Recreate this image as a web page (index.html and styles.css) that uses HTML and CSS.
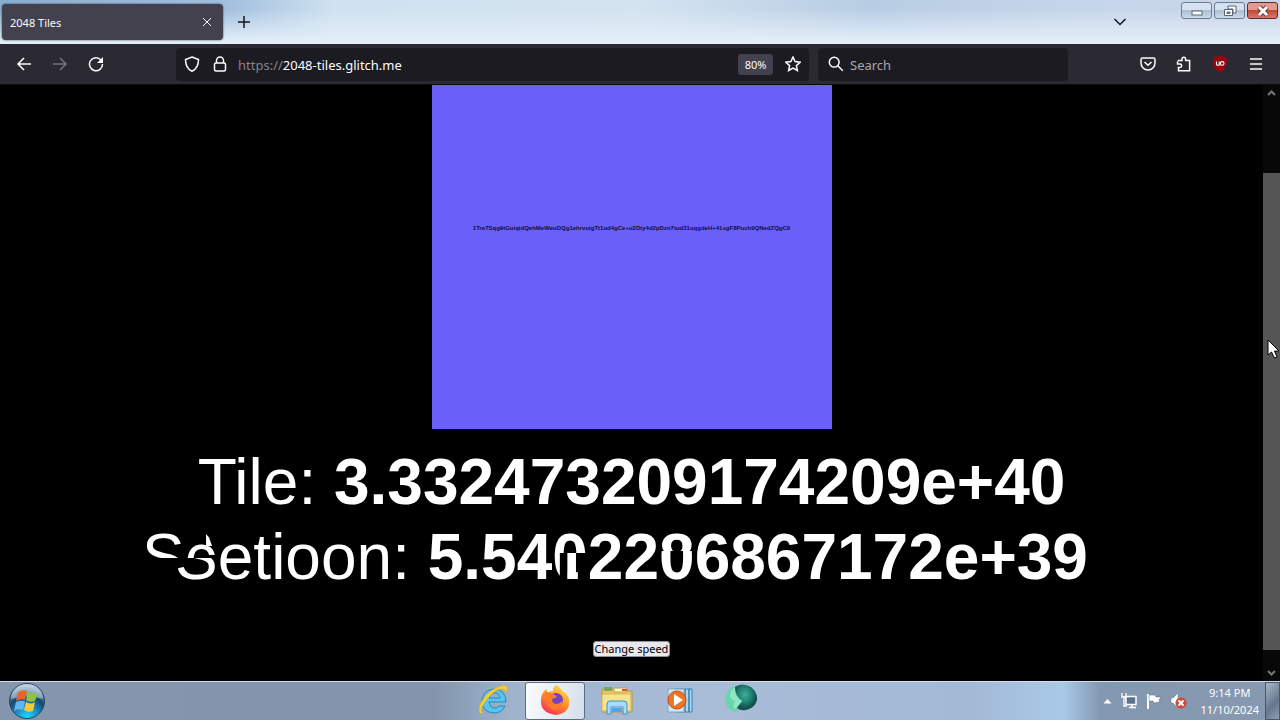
FILE: index.html
```html
<!DOCTYPE html>
<html lang="en">
<head>
<meta charset="utf-8">
<title>2048 Tiles</title>
<link rel="stylesheet" href="styles.css">
</head>
<body>
<header class="titlebar">
  <div class="tab">
    <span>2048 Tiles</span>
    <button class="icon-btn tab-close" aria-label="Close tab"><svg width="10" height="10" viewBox="0 0 10 10"><path d="M1 1l8 8M9 1L1 9"/></svg></button>
  </div>
  <button class="icon-btn new-tab" aria-label="New tab"><svg width="14" height="14" viewBox="0 0 14 14"><path d="M7 1v12M1 7h12"/></svg></button>
  <button class="icon-btn list-tabs" aria-label="List all tabs"><svg width="14" height="10" viewBox="0 0 14 10"><path d="M1.500 2l5.500 5.500L12.500 2"/></svg></button>
  <div class="window-controls">
    <button aria-label="Minimize"><svg width="14" height="12" viewBox="0 0 14 12"><rect x="2" y="6" width="10" height="4" fill="#fff" stroke="#566579"/></svg></button>
    <button aria-label="Restore"><svg width="14" height="12" viewBox="0 0 14 12"><path d="M5 1h8v7h-3V4H5z" fill="#fff" stroke="#566579"/><path d="M1.500 4.500h8v6h-8z" fill="#fff" stroke="#566579"/><path d="M4 7h3v1.500H4z" fill="#8ca0b8" stroke="#566579"/></svg></button>
    <button class="close" aria-label="Close"><svg width="14" height="12" viewBox="0 0 14 12"><path d="M3 2l8 8M11 2l-8 8" stroke="#6e3339" stroke-width="5"/><path d="M3 2l8 8M11 2l-8 8" stroke="#fff" stroke-width="3"/></svg></button>
  </div>
</header>
<nav class="toolbar">
  <div class="nav-buttons">
    <button class="icon-btn" aria-label="Back"><svg width="16" height="16" viewBox="0 0 16 16"><path d="M15 8H2M8 2L2 8l6 6"/></svg></button>
    <button class="icon-btn dim" aria-label="Forward"><svg width="16" height="16" viewBox="0 0 16 16"><path d="M1 8h13M8 2l6 6-6 6"/></svg></button>
    <button class="icon-btn" aria-label="Reload"><svg width="16" height="16" viewBox="0 0 16 16"><path d="M13 4a6.500 6.500 0 1 0 1.500 4"/><path d="M15 1v6H9z" fill="#fbfbfe" stroke="none"/></svg></button>
  </div>
  <div class="address">
    <button class="icon-btn" aria-label="Protections"><svg width="16" height="16" viewBox="0 0 16 16"><path d="M8 1l6.500 2.500C14.500 9 13 13 8 15.300 3 13 1.500 9 1.500 3.500z"/></svg></button>
    <button class="icon-btn" aria-label="Site security"><svg width="16" height="16" viewBox="0 0 16 16"><rect x="2.500" y="7" width="11" height="8" rx="1.500"/><path d="M4.500 7V4.500a3.500 3.500 0 0 1 7 0V7"/></svg></button>
    <a class="url" href="#"><span>https://</span>2048-tiles.glitch.me</a>
    <button class="zoom-level">80%</button>
    <button class="icon-btn" aria-label="Bookmark"><svg width="16" height="16" viewBox="0 0 16 16"><path d="M8 1l2.100 4.600 5 .6-3.700 3.400 1 4.900L8 12.100l-4.400 2.400 1-4.900L.9 6.200l5-.6z"/></svg></button>
  </div>
  <div class="search">
    <svg class="line" width="16" height="16" viewBox="0 0 16 16"><circle cx="6.200" cy="6.200" r="4.900"/><path d="M9.800 9.800l5 5"/></svg>
    <input type="text" placeholder="Search" aria-label="Search">
  </div>
  <div class="extensions">
    <button class="icon-btn" aria-label="Pocket"><svg width="16" height="16" viewBox="0 0 16 16"><path d="M2.500 2h11a1.500 1.500 0 0 1 1.500 1.500V7A7 7 0 0 1 1 7V3.500A1.500 1.500 0 0 1 2.500 2z"/><path d="M4.500 6L8 9.300 11.500 6"/></svg></button>
    <button class="icon-btn" aria-label="Extensions"><svg width="16" height="16" viewBox="0 0 16 16"><path d="M2.500 5.500V4.500H6V3a1.800 1.800 0 0 1 3.600 0v1.500h4v10.300H2.500v-3.300H4a1.600 1.600 0 0 0 0-3.400H1.500V5.500"/></svg></button>
    <button class="icon-btn ublock" aria-label="uBlock Origin"><svg width="16" height="16" viewBox="0 0 16 16"><path d="M8 0c2 1.500 4 2 6 2 .8 6-1 11-6 14C3 13 1.200 8 2 2c2 0 4-.5 6-2z" fill="#970711" stroke="#970711"/><path d="M4.500 5.500v2.700q0 1 1.300 1h1.400V5.500" stroke="#fff" stroke-width="1.100"/><circle cx="10.200" cy="7.400" r="1.800" stroke="#fff" stroke-width="1.100"/></svg></button>
    <button class="icon-btn" aria-label="Menu"><svg width="16" height="16" viewBox="0 0 16 16"><path d="M2 3h12M2 8h12M2 13h12"/></svg></button>
  </div>
</nav>
<div class="viewport">
  <main class="page">
    <div class="tile">1Tre7Sqg9tGuiqidQehMeWeuDQg1ehrvuigTt1ud4gCe+u2Dty4d2pDzn7tud31uqgdeH+41sgF8Puch9QNedZQgC9</div>
    <p class="score">Tile: <b>3.332473209174209e+40</b></p>
    <p class="score"><span class="blend notch"><span class="lower-s">S</span><span class="over upper-sc" aria-hidden="true">Sc</span></span>etioon: <b>5.54<span class="blend"><span class="lower-one">1</span><span class="over upper-zero" aria-hidden="true">0</span><span class="over side-zero" aria-hidden="true">0</span></span>22<span class="blend"><span class="lower-zero">0</span><span class="over upper-eight" aria-hidden="true">8</span></span>6867172e+39</b></p>
    <button class="speed">Change speed</button>
  </main>
  <aside class="scrollbar">
    <svg width="9" height="6" viewBox="0 0 9 6"><path d="M1 5l3.500-3.500L8 5"/></svg>
    <div class="track"><div class="thumb"></div></div>
    <svg class="end" width="9" height="6" viewBox="0 0 9 6"><path d="M1 1l3.500 3.500L8 1"/></svg>
  </aside>
</div>
<footer class="taskbar">
  <button class="start" aria-label="Start"><svg width="38" height="38" viewBox="0 0 38 38">
    <defs><radialGradient id="orb" cx=".5" cy=".95" r=".9"><stop offset="0" stop-color="#20d8ff"/><stop offset=".4" stop-color="#1683bd"/><stop offset=".65" stop-color="#17466f"/><stop offset="1" stop-color="#a8bed0"/></radialGradient></defs>
    <circle cx="19" cy="19" r="17.500" fill="url(#orb)" stroke="#29465f"/>
    <path d="M3 17a16 15 0 0 1 32 0q-16-5-32 0z" fill="#dceaf3" opacity=".45"/>
    <path d="M10 10q5-3 9-1l-2 9q-4-2-9 1z" fill="#e9632c"/><path d="M20 10q5 3 10 1l-3 8q-5 2-9-1z" fill="#8fc443"/><path d="M8 20q5-2 9-.5L15 28q-5-2-9 1z" fill="#62b5ed"/><path d="M18 20q5 3 9 0l-2 9q-5 2-9-1z" fill="#fbc83a"/></svg></button>
  <div class="apps">
    <button aria-label="Internet Explorer"><svg width="34" height="34" viewBox="0 0 34 34"><path d="M30 19H13q1 6 6 6 3 0 4-2h6q-3 7-11 7Q6 29 6 18 7 7 18 6q12 1 12 13zM13 15h11q-1-5-5-5-5 0-6 5z" fill="#55c6ee" stroke="#2589c4"/><path d="M5 31C-1 27 8 11 18 6q11-6 13-2 1 3-2 7 1-5-3-5-6 0-13 8C7 21 3 29 7 29z" fill="#f6ce32" stroke="#d6a52c" stroke-width=".5"/></svg></button>
    <button class="active" aria-label="Firefox"><svg width="32" height="32" viewBox="0 0 32 32"><defs><linearGradient id="fox" x1=".8" y1="0" x2=".25" y2="1"><stop offset="0" stop-color="#ffe23c"/><stop offset=".45" stop-color="#ff9a28"/><stop offset="1" stop-color="#f12c55"/></linearGradient></defs><path d="M17 1q5 3 6 6 5 2 7 8 2 14-13 16Q1 29 2 16q0-6 5-11l2 4q2-2 5-2 0-4 3-6z" fill="url(#fox)"/><circle cx="17" cy="16" r="7" fill="#7343c4"/><path d="M5 9q5-2 8 1l5 2q-2 3-5 3 0 5 5 5 3 0 5-3 1 8-6 9Q6 25 8 14z" fill="#ff7a29"/></svg></button>
    <button aria-label="Windows Explorer"><svg width="34" height="34" viewBox="0 0 34 34"><path d="M2 6h10l2 2h18v21H2z" fill="#e9c867" stroke="#bd963e"/><path d="M4 4h8v4H4z" fill="#79a65b"/><path d="M14 5h13v4H14z" fill="#fff7cf" stroke="#c4a349"/><path d="M22 6h5v2h-5z" fill="#cc533b"/><path d="M2 11h29v17H2z" fill="#f6e28f" stroke="#d4b65c"/><path d="M7 31V21q0-3 3-3h14q3 0 3 3v10h-4v-7H11v7z" fill="#a4ddf5" stroke="#428fc0"/><path d="M12 25h10v4H12z" fill="#4fa9d8"/></svg></button>
    <button aria-label="Windows Media Player"><svg width="32" height="32" viewBox="0 0 32 32"><path d="M12 5h17v23H12z" fill="#add7ee" stroke="#3e83ae"/><path d="M22 5v23M26 5v23" stroke="#2783b5" stroke-width="1.500"/><path d="M5 5h16v23H5z" fill="#d3e6f0" stroke="#7ca6bf"/><circle cx="14" cy="16" r="9" fill="#ef7424" stroke="#cb5013"/><path d="M11 10l9 6-9 6z" fill="#fff"/></svg></button>
    <button class="raised" aria-label="Teal sphere"><svg width="34" height="30" viewBox="0 0 34 30"><defs><radialGradient id="ball" cx=".45" cy=".4"><stop stop-color="#3fae94"/><stop offset=".6" stop-color="#1f8275"/><stop offset="1" stop-color="#14524c"/></radialGradient></defs><path d="M13 1Q2 4 1 16q2 11 11 12l6-9z" fill="#66d6ad"/><path d="M11 3Q18-2 27 3q7 6 6 13-2 8-11 10-6 1-9-2l5-7q-7-5-7-14z" fill="url(#ball)"/><path d="M11 3q-2 9 7 14l-7 8q-3-3 0-8-5-2-5-6 1-6 5-8z" fill="#92e5c4"/></svg></button>
  </div>
  <div class="tray">
    <svg width="9" height="6" viewBox="0 0 9 6"><path d="M0.500 5.500L4.500 1l4 4.500z" fill="#fff"/></svg>
    <svg width="18" height="18" viewBox="0 0 18 18"><path d="M6 4.500h10v8H6zM9 15.500h7M12 13v2" fill="#59738c" stroke="#fff" stroke-width="1.500"/><path d="M2 1v4h4V1M4 5v9h3" fill="none" stroke="#fff" stroke-width="1.300"/></svg>
    <svg width="16" height="18" viewBox="0 0 16 18"><path d="M2 2v15" stroke="#fff" stroke-width="2"/><path d="M3 3h6l1 2h5l-2 3 1 2-6 1-1-2H3z" fill="#fff" stroke="#52687d" stroke-width=".5"/></svg>
    <svg width="18" height="18" viewBox="0 0 18 18"><path d="M1 6h2l5-5v15l-5-5H1z" fill="#fff" stroke="#647a90" stroke-width=".5"/><circle cx="11" cy="11" r="5.500" fill="#d34937"/><path d="M8.500 8.500l5 5m0-5l-5 5" stroke="#fff" stroke-width="2"/></svg>
    <time class="clock">9:14 PM<br>11/10/2024</time>
    <button class="show-desktop" aria-label="Show desktop"></button>
  </div>
</footer>
<svg class="pointer" width="13" height="20" viewBox="0 0 13 20"><path d="M1 1v15l3.500-3 3 6 2.500-1-2.500-6H12z" fill="#fff" stroke="#000"/></svg>
</body>
</html>
```
FILE: styles.css
```css
* { box-sizing: border-box; }
body {
  margin: 0;
  height: 100vh;
  display: flex;
  flex-direction: column;
  overflow: hidden;
  background: #000;
  font-family: "Noto Sans", sans-serif;
  font-size: 13px;
}
button { border: 0; padding: 0; background: none; font: inherit; color: inherit; }
svg { display: block; flex: none; }

.titlebar {
  flex: none;
  height: 44px;
  display: flex;
  align-items: center;
  padding-left: 2px;
  background:
    linear-gradient(180deg, transparent 20%, #e4eef8 95%),
    linear-gradient(90deg, #89add0 0, #a3c0de 18%, #cfe2f0 26%, #d4e3f0 50%, #b8cde3 68%, #c6d6ea 85%, #c9d5e8 100%);
}
.icon-btn { display: flex; align-items: center; justify-content: center; flex: none; }
.icon-btn svg, .line { fill: none; stroke: #fbfbfe; stroke-width: 1.5; }
.tab {
  width: 221px;
  height: 36px;
  padding: 0 11px 0 8px;
  display: flex;
  align-items: center;
  justify-content: space-between;
  border-radius: 4px;
  background: #42414d;
  box-shadow: 0 0 2px #33323d;
  color: #fbfbfe;
  font-size: 11px;
}
.tab-close svg { stroke-width: 1; }
.new-tab { margin-left: 14px; }
.new-tab svg, .list-tabs svg { stroke: #15141a; }
.list-tabs { margin-left: auto; }
.window-controls { display: flex; gap: 2px; align-self: flex-start; margin: 2px 2px 0 54px; }
.window-controls button {
  width: 31px;
  height: 17px;
  display: flex;
  align-items: center;
  justify-content: center;
  border: 1px solid #6c7c92;
  border-radius: 3px;
  background: linear-gradient(#d5e1ef 45%, #aebfd4 50%, #cbdaea);
}
.window-controls .close { border-color: #612832; background: linear-gradient(#e49b8d 45%, #c5473a 50%, #d47b68); }

.toolbar {
  flex: none;
  height: 41px;
  display: flex;
  align-items: center;
  padding: 0 16px;
  background: #2b2a33;
  border-bottom: 1px solid #0c0c0d;
}
.nav-buttons, .extensions { display: flex; gap: 20px; }
.dim { opacity: .35; }
.address {
  flex: 1;
  height: 33px;
  margin-left: 72px;
  padding: 0 8px;
  display: flex;
  align-items: center;
  gap: 12px;
  border-radius: 4px;
  background: #1c1b22;
}
.url { flex: 1; margin-left: -2px; padding-top: 1px; color: #fbfbfe; text-decoration: none; }
.url span { color: #85848c; }
.zoom-level { width: 35px; height: 21px; border-radius: 3px; background: #42414d; color: #fbfbfe; font-size: 11px; }
.search {
  width: 250px;
  height: 33px;
  margin: 0 72px 0 9px;
  padding-left: 10px;
  display: flex;
  align-items: center;
  gap: 6px;
  border-radius: 4px;
  background: #1c1b22;
}
.search input { flex: 1; min-width: 0; padding: 1px 0 0; border: 0; background: none; color: #fbfbfe; font: inherit; }
.search input::placeholder { color: #a9a8af; opacity: 1; }

.viewport { flex: 1; min-height: 0; display: flex; }
.page { flex: 1; display: flex; flex-direction: column; align-items: center; color: #fff; }
.tile {
  width: 400px;
  height: 344px;
  margin-bottom: 16px;
  padding-bottom: 58px;
  display: flex;
  align-items: center;
  justify-content: center;
  background: #6a5ff9;
  color: #100e3a;
  font: bold 6px "Liberation Sans", Arial, sans-serif;
  white-space: nowrap;
}
.score { margin: 0; font: 64px/75px "Liberation Sans", Arial, sans-serif; white-space: nowrap; }

/* Digits and letters caught halfway between two values */
.blend { position: relative; display: inline-block; }
.blend > span { display: inline-block; }
.blend .over { position: absolute; top: 0; left: 0; }
.lower-s { clip-path: inset(38px 0 0 0); }
.blend .upper-sc { left: -33px; clip-path: inset(0 0 37px 0); }
.notch::after {
  content: "";
  position: absolute;
  left: 31px;
  top: 14px;
  width: 6px;
  height: 12px;
  background: #fff;
  clip-path: polygon(0 0, 50% 30%, 100% 100%, 0 100%);
}
.lower-one { clip-path: inset(33px 10px 0 15px); }
.upper-zero { clip-path: inset(0 0 42px 0); }
.side-zero { clip-path: inset(33px 28px 0 0); }
.lower-zero { clip-path: inset(31px 0 0 0); }
.upper-eight { clip-path: inset(0 0 44px 0); }

.speed {
  height: 16px;
  margin-top: 46px;
  padding: 0 1px;
  border: 1px solid #8f8f9d;
  border-radius: 3px;
  background: #e9e9ed;
  color: #000;
  font-size: 11px;
  line-height: 14px;
}
.scrollbar {
  width: 17px;
  padding: 5px 0;
  display: flex;
  flex-direction: column;
  align-items: center;
  background: #080808;
}
.scrollbar svg { fill: none; stroke: #777; stroke-width: 2; }
.track { flex: 1; width: 100%; padding: 77px 0 20px; display: flex; }
.thumb { flex: 1; background: #555; }

.taskbar {
  flex: none;
  height: 39px;
  display: grid;
  grid-template-columns: 463px 1fr auto;
  border-top: 1px solid #d5dfeb;
  background: linear-gradient(90deg, #8496ad 0, #8295ad 34%, #a0b3cd 40%, #a9bcd8 55%, #a3b9d6 76%, #a9c9e9 83%, #8398b1 86%, #8799af 100%);
}
.start { width: 38px; margin-left: 8px; }
.apps { display: flex; gap: 2px; }
.apps button { width: 60px; padding-bottom: 2px; display: flex; align-items: center; justify-content: center; border-radius: 3px; }
.apps .active { border: 1px solid #5c6d85; background: linear-gradient(100deg, #fafbfd, #d5dfeb); }
.apps .raised { align-items: flex-start; padding-top: 2px; }
.tray { display: flex; align-items: center; gap: 8px; }
.clock { margin: 0 -2px 0 4px; color: #fff; font-size: 11px; line-height: 17px; text-align: center; }
.show-desktop { width: 15px; align-self: stretch; border: 1px solid #46586e; background: linear-gradient(135deg, #a8b6c6, #64778d 60%, #8da0b5); }
.pointer { position: absolute; right: 0; top: 339px; }
```
